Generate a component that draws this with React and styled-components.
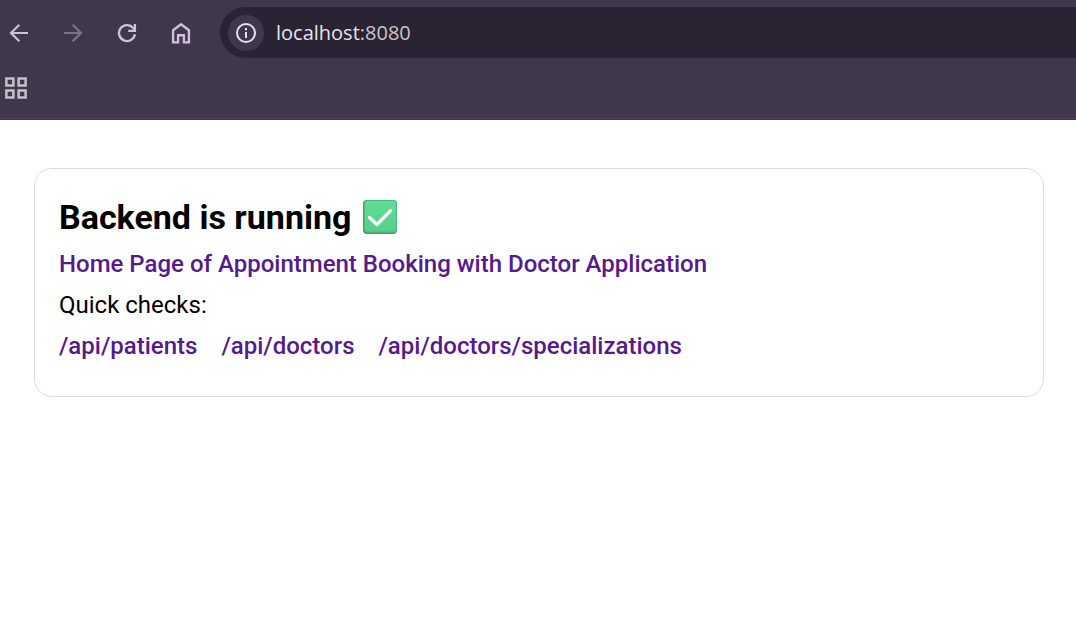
import React from "react";
import styled, { createGlobalStyle } from "styled-components";

const GlobalStyle = createGlobalStyle`
  *, *::before, *::after { box-sizing: border-box; }
  body {
    margin: 0;
    background: #ffffff;
    color: #000000;
    font-family: Roboto, "Liberation Sans", sans-serif;
  }
`;

const BrowserChrome = styled.header`
  padding-bottom: 1px;
  background: #40374b;
  border-bottom: 1px solid #3f3a42;
  box-shadow: inset 0 -1px 0 #4b4250;
`;

const Toolbar = styled.div`
  display: flex;
  align-items: center;
  gap: 16px;
  padding-top: 7px;
`;

const IconButton = styled.button`
  display: flex;
  flex: none;
  align-items: center;
  justify-content: center;
  width: 38px;
  height: 38px;
  padding: 0;
  border: 0;
  background: none;
  color: ${(p) => (p.disabled ? "#7d7389" : "#cdc1de")};
`;

const AddressBar = styled.div`
  display: flex;
  flex: 1;
  align-items: center;
  gap: 12px;
  height: 51px;
  margin-left: 4px;
  padding-left: 8px;
  border-radius: 26px 0 0 26px;
  background: #2a2334;
`;

const SiteInfo = styled.button`
  display: flex;
  flex: none;
  align-items: center;
  justify-content: center;
  width: 36px;
  height: 36px;
  padding: 0;
  border: 0;
  border-radius: 50%;
  background: #40374b;
  color: #e4dfe9;
`;

const Address = styled.div`
  font-family: "Open Sans", "Noto Sans", sans-serif;
  font-size: 20px;
  line-height: 28px;
  color: #e8e2ee;
`;

const Port = styled.span`
  color: #c9c3cc;
`;

const BookmarksBar = styled.div`
  display: flex;
  align-items: center;
  height: 60px;
`;

const AppsButton = styled(IconButton)`
  width: 32px;
  color: #c8c0c9;
`;

const Page = styled.main`
  padding: 48px 32px 48px 34px;
`;

const Card = styled.section`
  display: flex;
  flex-direction: column;
  gap: 5px;
  padding: 24px 24px 32px;
  border: 1px solid #dddddd;
  border-radius: 18px;
`;

const Title = styled.h1`
  display: flex;
  align-items: center;
  gap: 12px;
  margin: 0;
  font-size: 34px;
  font-weight: 700;
  line-height: 48px;
`;

const Line = styled.p`
  display: flex;
  flex-wrap: wrap;
  column-gap: 24px;
  margin: 0;
  font-size: 24px;
  line-height: 36px;
`;

const PageLink = styled.a`
  color: #551a8b;
  font-weight: 500;
  text-decoration: none;
`;

const BackIcon = () => (
  <svg width="20" height="20" viewBox="0 0 20 20" fill="none" stroke="currentColor" strokeWidth="2.2" aria-hidden="true">
    <path d="M19 10H2.5M10.3 1.7 2 10l8.3 8.3" />
  </svg>
);

const ForwardIcon = () => (
  <svg width="20" height="20" viewBox="0 0 20 20" fill="none" stroke="currentColor" strokeWidth="2.2" aria-hidden="true">
    <path d="M1 10h16.5M9.7 1.7 18 10l-8.3 8.3" />
  </svg>
);

const ReloadIcon = () => (
  <svg width="20" height="20" viewBox="0 0 20 20" fill="none" stroke="currentColor" strokeWidth="2.3" aria-hidden="true">
    <path d="M17.9 11.3A8 8 0 1 1 16.2 5l1.6 1.8" />
    <path d="M17.9 1v6.8h-6.7" />
  </svg>
);

const HomeIcon = () => (
  <svg width="20" height="22" viewBox="0 0 20 22" fill="none" stroke="currentColor" strokeWidth="2.4" aria-hidden="true">
    <path d="M2.1 8.2 10 2.2l7.9 6v12.2h-5v-7.1H7.1v7.1h-5z" />
  </svg>
);

const InfoIcon = () => (
  <svg width="20" height="20" viewBox="0 0 20 20" fill="none" stroke="currentColor" strokeWidth="2" aria-hidden="true">
    <circle cx="10" cy="10" r="9" />
    <path d="M10 9v6M10 5v2.2" />
  </svg>
);

const AppsIcon = () => (
  <svg width="22" height="22" viewBox="0 0 22 22" fill="none" stroke="currentColor" strokeWidth="2.5" aria-hidden="true">
    <path d="M1.4 1.4h7v7h-7zM13.6 1.4h7v7h-7zM1.4 13.6h7v7h-7zM13.6 13.6h7v7h-7z" />
  </svg>
);

const CheckIcon = () => (
  <svg width="34" height="34" viewBox="0 0 34 34" role="img" aria-label="Check mark">
    <defs>
      <linearGradient id="tile" x1="0" y1="0" x2="0" y2="1">
        <stop offset="0" stopColor="#60de94" />
        <stop offset="1" stopColor="#56cf8b" />
      </linearGradient>
    </defs>
    <rect width="34" height="34" rx="4" fill="#44a072" />
    <rect x="1" width="33" height="32.5" rx="4" fill="#50b981" />
    <rect x="2" y="1" width="31" height="30.5" rx="3" fill="url(#tile)" />
    <path d="M6.5 17.5 14 24.5 27.7 10.5" fill="none" stroke="#f6f1fc" strokeWidth="3.4" strokeLinecap="round" strokeLinejoin="round" />
  </svg>
);

const checks = ["/api/patients", "/api/doctors", "/api/doctors/specializations"];

export default function App() {
  return (
    <>
      <GlobalStyle />
      <BrowserChrome>
        <Toolbar>
          <IconButton type="button" aria-label="Back"><BackIcon /></IconButton>
          <IconButton type="button" aria-label="Forward" disabled><ForwardIcon /></IconButton>
          <IconButton type="button" aria-label="Reload"><ReloadIcon /></IconButton>
          <IconButton type="button" aria-label="Home"><HomeIcon /></IconButton>
          <AddressBar>
            <SiteInfo type="button" aria-label="View site information"><InfoIcon /></SiteInfo>
            <Address>localhost<Port>:8080</Port></Address>
          </AddressBar>
        </Toolbar>
        <BookmarksBar>
          <AppsButton type="button" aria-label="Apps"><AppsIcon /></AppsButton>
        </BookmarksBar>
      </BrowserChrome>
      <Page>
        <Card>
          <Title>Backend is running <CheckIcon /></Title>
          <Line>
            <PageLink href="/">Home Page of Appointment Booking with Doctor Application</PageLink>
          </Line>
          <Line>Quick checks:</Line>
          <Line>
            {checks.map((path) => (
              <PageLink key={path} href={path}>{path}</PageLink>
            ))}
          </Line>
        </Card>
      </Page>
    </>
  );
}
